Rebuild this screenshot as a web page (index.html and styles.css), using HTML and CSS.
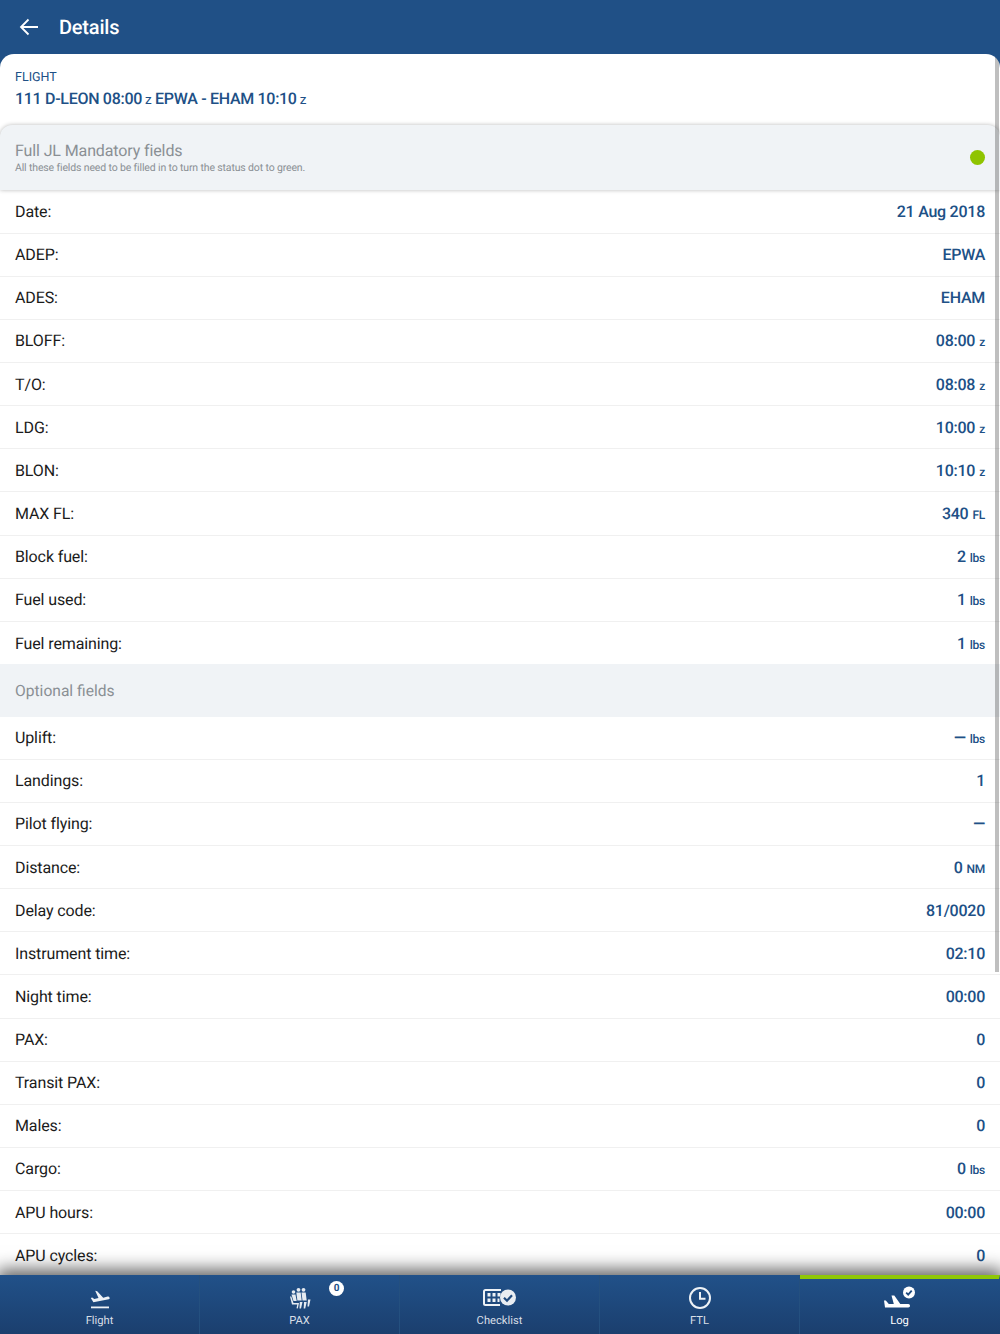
FILE: index.html
```html
<!DOCTYPE html>
<html lang="en">
<head>
<meta charset="utf-8">
<title>Details</title>
<link rel="stylesheet" href="styles.css">
</head>
<body>
<div class="app">
  <header class="topbar">
    <svg class="back" viewBox="0 0 20 18" width="20" height="18"><path d="M19 9H2M9.500 1.500 2 9l7.500 7.500" fill="none" stroke="#fff" stroke-width="1.800"/></svg>
    <h1 class="title">Details</h1>
  </header>
  <main class="sheet">
    <section class="flight">
      <div class="flight-label">FLIGHT</div>
      <div class="flight-line">111 D-LEON 08:00<small>z</small> EPWA - EHAM 10:10<small>z</small></div>
    </section>
    <section class="mandatory">
      <div>
        <div class="section-title">Full JL Mandatory fields</div>
        <div class="section-note">All these fields need to be filled in to turn the status dot to green.</div>
      </div>
      <span class="dot"></span>
    </section>
    <div class="rows">
      <div class="row"><span>Date:</span><b>21 Aug 2018</b></div>
      <div class="row"><span>ADEP:</span><b>EPWA</b></div>
      <div class="row"><span>ADES:</span><b>EHAM</b></div>
      <div class="row"><span>BLOFF:</span><b>08:00<small>z</small></b></div>
      <div class="row"><span>T/O:</span><b>08:08<small>z</small></b></div>
      <div class="row"><span>LDG:</span><b>10:00<small>z</small></b></div>
      <div class="row"><span>BLON:</span><b>10:10<small>z</small></b></div>
      <div class="row"><span>MAX FL:</span><b>340<small>FL</small></b></div>
      <div class="row"><span>Block fuel:</span><b>2<small>lbs</small></b></div>
      <div class="row"><span>Fuel used:</span><b>1<small>lbs</small></b></div>
      <div class="row last"><span>Fuel remaining:</span><b>1<small>lbs</small></b></div>
    </div>
    <div class="optional">Optional fields</div>
    <div class="rows">
      <div class="row"><span>Uplift:</span><b>—<small>lbs</small></b></div>
      <div class="row"><span>Landings:</span><b>1</b></div>
      <div class="row"><span>Pilot flying:</span><b>—</b></div>
      <div class="row"><span>Distance:</span><b>0<small>NM</small></b></div>
      <div class="row"><span>Delay code:</span><b>81/0020</b></div>
      <div class="row"><span>Instrument time:</span><b>02:10</b></div>
      <div class="row"><span>Night time:</span><b>00:00</b></div>
      <div class="row"><span>PAX:</span><b>0</b></div>
      <div class="row"><span>Transit PAX:</span><b>0</b></div>
      <div class="row"><span>Males:</span><b>0</b></div>
      <div class="row"><span>Cargo:</span><b>0<small>lbs</small></b></div>
      <div class="row"><span>APU hours:</span><b>00:00</b></div>
      <div class="row"><span>APU cycles:</span><b>0</b></div>
    </div>
    <div class="scrollbar"></div>
  </main>
  <nav class="tabs">
    <a class="tab">
      <svg class="icon" viewBox="0 0 24 24" width="24" height="24"><path d="M3 20.500h18v1.800H3z" fill="#eef2f6"/><path d="M20.800 13.200c.8-.2 1-.9.800-1.500-.3-.9-1.100-1.300-1.900-1.100l-4.500 1.200L9.200 5.300l-2-.5 3.300 7.200-4.200 1.100-2.100-1.600-1.400.4 2.600 4.400z" fill="#eef2f6"/></svg>
      <span>Flight</span>
    </a>
    <a class="tab">
      <svg class="icon" viewBox="0 0 24 24" width="24" height="24"><g fill="#e6ebf1"><circle cx="5.500" cy="6" r="1.800"/><circle cx="10.500" cy="3.800" r="1.900"/><circle cx="15.500" cy="3.800" r="1.900"/><path d="M3.500 8.500h4l1.200 6.500H5.500z"/><path d="M8.300 6.500h4.400l1 8h-4.300z"/><path d="M13.500 6.500h4.200l1 8h-4.200z"/><path d="M2 10.500h1.300l2.200 6.500h5.500l-1.200 5.500-1.300-.3.800-3.700H4z"/><path d="M11.800 16h2.700l-1.500 6.500h-1.500zM16 16h2.700l-1.500 6.500h-1.500zM20 13.500h2.500L21 20.500h-1.500z"/></g></svg>
      <span>PAX</span>
      <em class="badge">0</em>
    </a>
    <a class="tab">
      <svg class="icon wide" viewBox="0 0 34 24" width="34" height="24"><path d="M18 4H2.500C1.700 4 1 4.700 1 5.500v12c0 .8.700 1.500 1.500 1.500H17" fill="none" stroke="#eef2f6" stroke-width="2"/><g fill="#eef2f6"><path d="M4.500 7h3v3.500h-3zM9.500 7h3v3.500h-3zM14.500 7h3v3.500h-3zM4.500 12.500h3V16h-3zM9.500 12.500h3V16h-3zM14.500 12.500h2V16h-2z"/></g><circle cx="25" cy="11.500" r="8" fill="#e9edf2"/><path d="M21 11.700l3 3 5-5.500" fill="none" stroke="#1f4a7e" stroke-width="2.200"/></svg>
      <span>Checklist</span>
    </a>
    <a class="tab">
      <svg class="icon" viewBox="0 0 24 24" width="24" height="24"><circle cx="12" cy="12" r="10" fill="none" stroke="#eef2f6" stroke-width="2"/><path d="M12 6v6.800h5.500" fill="none" stroke="#eef2f6" stroke-width="2"/></svg>
      <span>FTL</span>
    </a>
    <a class="tab active">
      <svg class="icon wide" viewBox="0 0 34 24" width="34" height="24"><path d="M1 14.500h1.800l3 3.500h5L8.500 9.500h2.800l6 8.500h8c1.100 0 1.700.9 1.700 1.800 0 1-.7 1.700-1.700 1.700H2z" fill="#fff"/><circle cx="26" cy="6.500" r="6" fill="#fff"/><path d="M23.200 6.700l2 2 3.500-4" fill="none" stroke="#1f4a7e" stroke-width="1.800"/></svg>
      <span>Log</span>
    </a>
  </nav>
</div>
</body>
</html>
```
FILE: styles.css
```css
* { box-sizing: border-box; }
html, body { margin: 0; height: 100%; overflow: hidden; }
body { font-family: Roboto, sans-serif; color: #1b1b1b; background: #205086; text-rendering: geometricPrecision; }
.app { height: 1334px; display: flex; flex-direction: column; overflow: hidden; }
.topbar { height: 54px; flex: none; background: #205086; display: flex; align-items: center; padding: 0 0 0 19px; }
.back { display: block; margin-right: 20px; margin-top: -1px; }
.title { margin: 0; font-size: 20px; font-weight: 500; color: #fff; letter-spacing: -.2px; }
.sheet { flex: 1; min-height: 0; overflow: hidden; position: relative; background: #fff; border-radius: 14px 14px 0 0; }
.flight { height: 71px; padding: 16px 15px 0; color: #205086; }
.flight-label { font-size: 12.500px; line-height: 16px; }
.flight-line { font-size: 16px; font-weight: 500; line-height: 20px; margin-top: 3px; letter-spacing: -.3px; }
small { font-size: 12px; font-weight: 500; margin-left: 4px; }
.flight-line small { font-size: 13.500px; margin-left: 3px; font-weight: 400; }
.mandatory { height: 65px; background: #f0f3f6; border-radius: 12px 12px 0 0; box-shadow: 0 0 4px rgba(0,0,0,.28); padding: 0 15px; display: flex; align-items: center; justify-content: space-between; position: relative; }
.section-title { font-size: 16px; line-height: 20px; color: #8a8f94; letter-spacing: -.12px; margin-top: 1px; }
.section-note { font-size: 10.500px; line-height: 14px; color: #8a8f94; margin-top: 0; letter-spacing: -.145px; }
.dot { width: 15px; height: 15px; border-radius: 50%; background: #8fc400; }
.row { height: 43.130px; display: flex; align-items: center; justify-content: space-between; padding: 0 15px; font-size: 16px; letter-spacing: -.12px; border-bottom: 1px solid #f0f0f0; }
.rows { padding-top: .5px; }
.optional + .rows { padding-top: 0; }
.row.last { height: 42.730px; border-bottom: 0; }
.row b { font-weight: 500; color: #205086; letter-spacing: -.25px; }
.optional { height: 52.200px; background: #f0f3f6; padding: 0 15px; display: flex; align-items: center; font-size: 15.600px; color: #8a8f94; }
.scrollbar { position: absolute; right: 1px; top: 0; width: 4px; height: 918px; background: rgba(0,0,0,.25); }
.tabs { height: 59px; flex: none; display: grid; grid-template-columns: repeat(5, 1fr); background: linear-gradient(#215189, #1b3f6e); position: relative; box-shadow: 0 -3px 16px 3px rgba(0,0,0,.6); }
.tab { position: relative; display: flex; flex-direction: column; align-items: center; padding-top: 11px; color: #d8dfe7; font-size: 11.200px; line-height: 14px; border-right: 1px solid #24507f; }
.tab:last-child { border-right-color: transparent; }
.tab .icon { display: block; margin-bottom: 4px; }
.tab.active { color: #fff; border-top: 4px solid #8fc708; padding-top: 7px; }
.badge { position: absolute; left: 129px; top: 6px; width: 15px; height: 15px; border-radius: 50%; background: #fff; color: #205086; font-size: 10px; font-weight: 700; font-style: normal; line-height: 15px; text-align: center; }
```
